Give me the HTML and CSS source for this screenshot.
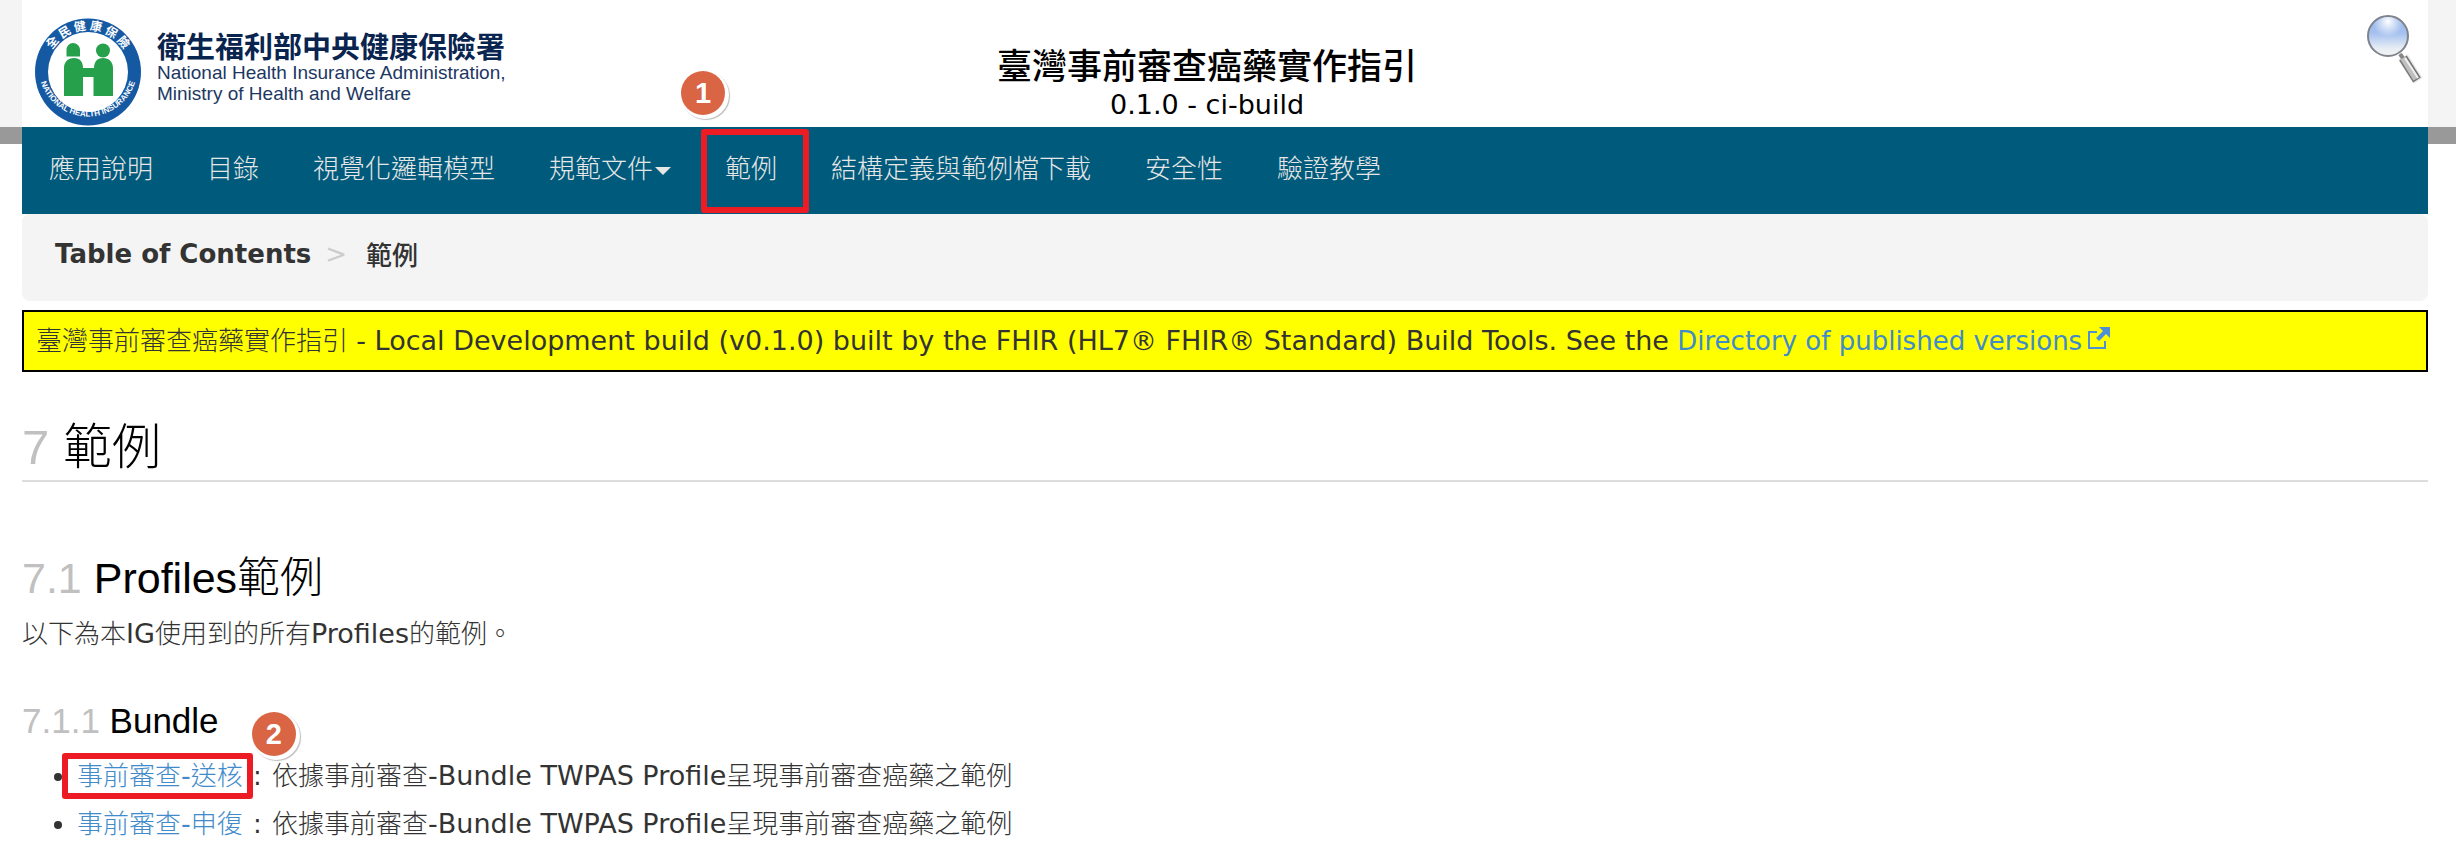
FILE: index.html
```html
<!DOCTYPE html>
<html lang="zh-Hant">
<head>
<meta charset="utf-8">
<title>範例 - 臺灣事前審查癌藥實作指引</title>
<link rel="stylesheet" href="styles.css">
</head>
<body>
<div class="page">
  <header class="header">
    <a class="logo" href="#">
      <svg class="logo-seal" width="108" height="110" viewBox="0 0 108 110" aria-hidden="true">
        <defs>
          <path id="arc-top" d="M 12 55 A 42 42 0 0 1 96 55"/>
          <path id="arc-bottom" d="M 4.500 50 A 49.500 49.500 0 1 0 103.500 50"/>
        </defs>
        <ellipse cx="54" cy="55" rx="53" ry="53.500" fill="#1659a3"/>
        <circle cx="54" cy="55" r="40" fill="#fff"/>
        <text class="seal-zh" text-anchor="middle"><textPath href="#arc-top" startOffset="50%">全 民 健 康 保 險</textPath></text>
        <text class="seal-en" text-anchor="middle"><textPath href="#arc-bottom" startOffset="50%">NATIONAL HEALTH INSURANCE</textPath></text>
        <g fill="#26a04b">
          <path d="M32.500 39.500V33c0-4 3-7 6.500-7s7 3 7 7v6.500z"/>
          <circle cx="69" cy="33.500" r="7"/>
          <path d="M30 79V51c0-6 4-10 10-10s9 4 9 10h11c0-6 3-10 9-10s10 4 10 10v28H59.500V60H49v19z"/>
        </g>
      </svg>
      <span class="logo-text">
        <span class="logo-zh">衛生福利部中央健康保險署</span>
        <span class="logo-en">National Health Insurance Administration,<br>Ministry of Health and Welfare</span>
      </span>
    </a>
    <div class="title">
      <div class="title-name">臺灣事前審查癌藥實作指引</div>
      <div class="title-version">0.1.0 - ci-build</div>
    </div>
    <a class="search" href="#" aria-label="Search">
      <svg width="58" height="70" viewBox="0 0 58 70">
        <defs>
          <linearGradient id="lens" x1="0" y1="0" x2="0" y2="1">
            <stop offset="0" stop-color="#8fb0ea"/>
            <stop offset=".45" stop-color="#a9c3f0"/>
            <stop offset=".8" stop-color="#e6edf5"/>
            <stop offset="1" stop-color="#f4f4f0"/>
          </linearGradient>
          <radialGradient id="shine" cx=".5" cy=".12" r=".4">
            <stop offset="0" stop-color="#fff"/>
            <stop offset="1" stop-color="#fff" stop-opacity="0"/>
          </radialGradient>
        </defs>
        <path d="M38 44l15 24" stroke="#bbb" stroke-width="11" opacity=".3"/>
        <path d="M35 41l5 7" stroke="#888" stroke-width="4"/>
        <path d="M38 45l14 22" stroke="#777" stroke-width="9"/>
        <path d="M38 45l13 21" stroke="#bfbfbf" stroke-width="6"/>
        <path d="M40 45l13 20" stroke="#f0f0f0" stroke-width="2"/>
        <circle cx="23" cy="23" r="20" fill="url(#lens)" stroke="#7f838b" stroke-width="2"/>
        <circle cx="23" cy="23" r="19" fill="url(#shine)"/>
      </svg>
    </a>
  </header>

  <nav class="nav">
    <a href="#">應用說明</a>
    <a href="#">目錄</a>
    <a href="#">視覺化邏輯模型</a>
    <a href="#">規範文件<span class="caret"></span></a>
    <a href="#" class="marked">範例<span class="frame frame-nav"></span><span class="badge badge-nav">1</span></a>
    <a href="#">結構定義與範例檔下載</a>
    <a href="#">安全性</a>
    <a href="#">驗證教學</a>
  </nav>

  <div class="breadcrumb">
    <a href="#">Table of Contents</a>
    <span class="separator">&gt;</span>
    <span class="current">範例</span>
  </div>

  <p class="notice">臺灣事前審查癌藥實作指引 <span class="latin">- Local Development build (v0.1.0) built by the FHIR (HL7® FHIR® Standard) Build Tools. See the</span> <a href="#">Directory of published versions<svg class="external" width="23" height="23" viewBox="0 0 23 23" aria-hidden="true"><path d="M10 5H2v16h16v-7" fill="none" stroke="#4f8fd6" stroke-width="2"/><path d="M12 0h11v11l-4-4-7 7-3-3 7-7z" fill="#4f8fd6"/></svg></a></p>

  <main>
    <h1><span class="number">7</span> 範例</h1>
    <h2><span class="number">7.1</span> Profiles範例</h2>
    <p class="intro">以下為本<span class="latin">IG</span>使用到的所有<span class="latin">Profiles</span>的範例。</p>
    <h3><span class="number">7.1.1</span> Bundle</h3>
    <ul class="examples">
      <li><a href="#" class="marked">事前審查<span class="latin">-</span>送核<span class="frame frame-link"></span><span class="badge badge-link">2</span></a><span class="colon"> : </span>依據事前審查<span class="latin">-Bundle TWPAS Profile</span>呈現事前審查癌藥之範例</li>
      <li><a href="#">事前審查<span class="latin">-</span>申復</a><span class="colon"> : </span>依據事前審查<span class="latin">-Bundle TWPAS Profile</span>呈現事前審查癌藥之範例</li>
    </ul>
  </main>
</div>
</body>
</html>
```
FILE: styles.css
```css
* { box-sizing: border-box; }

body {
  margin: 0;
  background:
    linear-gradient(#f4f4f4, #f4f4f4) 0 0 / 100% 127px no-repeat,
    linear-gradient(#999, #999) 0 127px / 100% 17px no-repeat,
    #fff;
  color: #333;
  font: 26px/48px Verdana, "DejaVu Sans", "Noto Sans CJK TC Light", "Noto Sans CJK TC", sans-serif;
}

a { color: #428bca; text-decoration: none; }

.latin { font-size: 27px; line-height: 1; }

.page { margin: 0 28px 0 22px; }

.header {
  display: grid;
  grid-template-columns: 500px 1fr 536px;
  height: 127px;
  background: #fff;
}

.logo { display: flex; align-items: flex-start; gap: 15px; padding: 17px 0 0 12px; }
.logo-seal { overflow: visible; }
.seal-zh { font: bold 12px "Noto Sans CJK TC", sans-serif; fill: #fff; }
.seal-en { font: bold 8px "Liberation Sans", Arial, sans-serif; fill: #fff; }
.logo-text { display: flex; flex-direction: column; padding-top: 11px; white-space: nowrap; }
.logo-zh { color: #0a2450; font: bold 29px/34px "Noto Sans CJK TC", sans-serif; }
.logo-en { color: #1d3763; font: 19px/21px "Liberation Sans", Arial, sans-serif; }

.title { padding-top: 42px; color: #000; text-align: center; white-space: nowrap; }
.title-name { font: 500 35px/44px "Noto Sans CJK TC", sans-serif; }
.title-version { font-size: 27px; line-height: 38px; }

.search { justify-self: end; padding: 13px 5px 0 0; line-height: 0; }

.nav {
  display: flex;
  height: 87px;
  background: #005a7b;
  white-space: nowrap;
}
.nav a { padding: 18px 27px; color: #e6e6e6; }
.caret {
  display: inline-block;
  margin-left: 2px;
  border: 8px solid transparent;
  border-top-color: #e6e6e6;
  border-bottom: 0;
  vertical-align: middle;
}

.breadcrumb {
  display: flex;
  height: 87px;
  padding: 16px 33px;
  border-radius: 8px;
  background: #f4f4f4;
  font-weight: bold;
}
.breadcrumb a { color: #333; }
.separator { margin: 0 19px 0 14px; color: #ccc; font-weight: normal; }
.current { font-family: "Noto Sans CJK TC", sans-serif; font-weight: 500; }

.notice {
  margin: 9px 0 0;
  padding: 5px 12px;
  border: 2px solid #000;
  background: #ff0;
}
.external { margin-left: 5px; }

h1, h2, h3 {
  margin: 0;
  color: #000;
  font-family: "Liberation Sans", Arial, "Noto Sans CJK TC Light", "Noto Sans CJK TC", sans-serif;
  font-weight: normal;
}
h1 { padding-top: 42px; border-bottom: 2px solid #ddd; font-size: 49px; line-height: 66px; }
h2 { padding: 66px 0 2px; font-size: 43px; line-height: 60px; }
h3 { padding-top: 39px; font-size: 35px; line-height: 48px; }
.number { color: #c0c0c0; }
.intro { margin: 0; }

.examples { margin: 7px 0 0; padding-left: 55px; }
.colon { margin: 0 2px; white-space: pre; }

.marked { position: relative; }
.frame { position: absolute; border: 6px solid #ed1c24; border-radius: 3px; }
.frame-nav { inset: 2px -5px 1px 3px; }
.frame-link { inset: -8px -10px -8px -15px; }
.badge {
  position: absolute;
  width: 44px;
  height: 44px;
  border-radius: 50%;
  background: #d96545;
  box-shadow: 2px 2px 0 2px #fff, 3px 3px 1px 2px #bbb;
  color: #fff;
  font: bold 29px/44px "Liberation Sans", Arial, sans-serif;
  text-align: center;
}
.badge-nav { top: -56px; left: -17px; }
.badge-link { top: -49px; right: -53px; }
```
